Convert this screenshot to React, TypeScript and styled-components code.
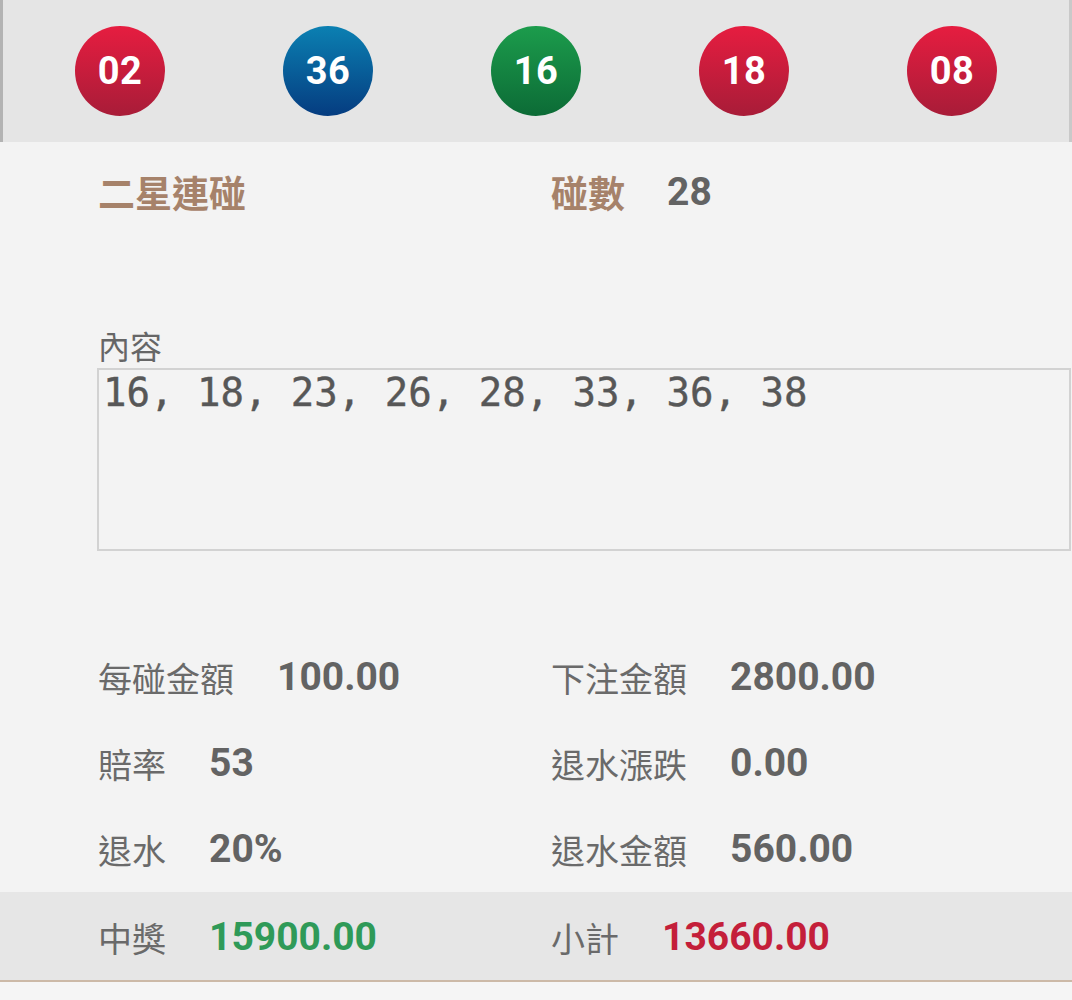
import styled, { createGlobalStyle } from "styled-components";

const GlobalStyle = createGlobalStyle`
  html, body {
    margin: 0;
    padding: 0;
    background: #f3f3f3;
    font-family: Roboto, "Noto Sans CJK TC", sans-serif;
  }
`;

const ballColors = {
  red: ["#e61d40", "#a81c38"],
  blue: ["#0b80b2", "#053c80"],
  green: ["#1c9c4c", "#0c6b36"],
};

type BallColor = keyof typeof ballColors;

const BallBar = styled.div`
  display: grid;
  grid-template-columns: repeat(5, 208px);
  align-items: center;
  height: 142px;
  padding: 0 13px;
  background: #e5e5e5;
  border-left: 3px solid #b3b3b3;
  border-right: 3px solid #c9c9c9;
`;

const BallCell = styled.div`
  display: flex;
  justify-content: center;
`;

const Ball = styled.div<{ $color: BallColor }>`
  width: 90px;
  height: 90px;
  border-radius: 50%;
  display: flex;
  align-items: center;
  justify-content: center;
  background: linear-gradient(
    180deg,
    ${(p) => ballColors[p.$color][0]},
    ${(p) => ballColors[p.$color][1]}
  );
  color: #fff;
  font-family: Roboto, sans-serif;
  font-weight: 700;
  font-size: 38px;
  letter-spacing: 0.5px;
`;

const Body = styled.div`
  padding-left: 98px;
`;

const TitleRow = styled.div`
  display: grid;
  grid-template-columns: 453px 1fr;
  align-items: center;
  height: 100px;
`;

const Title = styled.div`
  color: #a6826a;
  font-family: "Noto Sans CJK TC", sans-serif;
  font-weight: 700;
  font-size: 37px;
`;

const TitleStat = styled.div`
  display: flex;
  align-items: center;
  gap: 42px;
`;

const ContentLabel = styled.div`
  margin-top: 83px;
  color: #666;
  font-family: "Noto Sans CJK TC", sans-serif;
  font-size: 32px;
  line-height: 40px;
  height: 40px;
  margin-bottom: 3px;
`;

const ContentBox = styled.div`
  box-sizing: border-box;
  height: 183px;
  margin-left: -1px;
  margin-right: 1px;
  border: 2px solid #d2d2d2;
  padding: 1px 4px;
  color: #575757;
  font-family: "DejaVu Sans Mono", monospace;
  font-size: 39px;
  line-height: 44px;
  white-space: pre;
  -webkit-text-stroke: 0.4px #575757;
`;

const Grid = styled.div`
  display: grid;
  grid-template-columns: 453px 1fr;
  margin-top: 83px;
`;

const Item = styled.div`
  display: flex;
  align-items: center;
  gap: 43px;
  height: 86px;
`;

const Label = styled.span`
  color: #6a6a6a;
  font-family: "Noto Sans CJK TC", sans-serif;
  font-size: 34px;
`;

const Value = styled.span<{ $tone?: "green" | "red" }>`
  color: ${(p) =>
    p.$tone === "green" ? "#2f9a58" : p.$tone === "red" ? "#c41f3a" : "#636363"};
  font-family: Roboto, sans-serif;
  font-weight: 700;
  font-size: 39px;
`;

const TotalRow = styled.div`
  display: grid;
  grid-template-columns: 453px 1fr;
  padding-left: 98px;
  padding-top: 2px;
  height: 86px;
  background: #e6e6e6;
  border-bottom: 2px solid #ccb9a7;
`;

const Tail = styled.div`
  height: 18px;
  background: #f5f5f5;
`;

const balls: [string, BallColor][] = [
  ["02", "red"],
  ["36", "blue"],
  ["16", "green"],
  ["18", "red"],
  ["08", "red"],
];

const rows: [string, string][] = [
  ["每碰金額", "100.00"],
  ["下注金額", "2800.00"],
  ["賠率", "53"],
  ["退水漲跌", "0.00"],
  ["退水", "20%"],
  ["退水金額", "560.00"],
];

export default function App() {
  return (
    <>
      <GlobalStyle />
      <BallBar>
        {balls.map(([n, c]) => (
          <BallCell key={n}>
            <Ball $color={c}>{n}</Ball>
          </BallCell>
        ))}
      </BallBar>
      <Body>
        <TitleRow>
          <Title>二星連碰</Title>
          <TitleStat>
            <Title>碰數</Title>
            <Value>28</Value>
          </TitleStat>
        </TitleRow>
        <ContentLabel>內容</ContentLabel>
        <ContentBox>16, 18, 23, 26, 28, 33, 36, 38</ContentBox>
        <Grid>
          {rows.map(([label, value]) => (
            <Item key={label}>
              <Label>{label}</Label>
              <Value>{value}</Value>
            </Item>
          ))}
        </Grid>
      </Body>
      <TotalRow>
        <Item>
          <Label>中獎</Label>
          <Value $tone="green">15900.00</Value>
        </Item>
        <Item>
          <Label>小計</Label>
          <Value $tone="red">13660.00</Value>
        </Item>
      </TotalRow>
      <Tail />
    </>
  );
}
